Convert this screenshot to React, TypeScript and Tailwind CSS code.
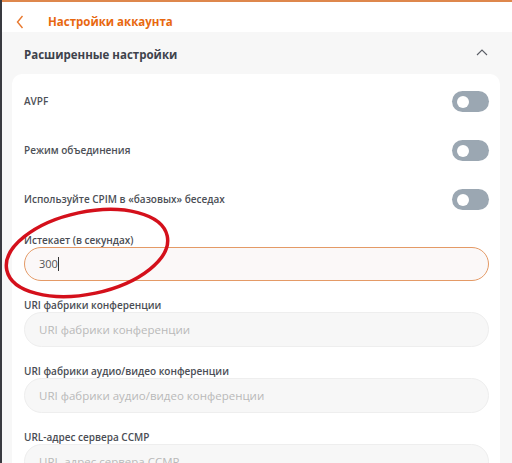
const font = { fontFamily: '"Open Sans", "Liberation Sans", sans-serif' }

function Toggle() {
  return (
    <div className="w-[37px] h-[21px] rounded-full bg-[#9ba7b2] flex items-center pl-[5px]">
      <div className="w-[12px] h-[12px] rounded-full bg-white" />
    </div>
  )
}

function ToggleRow({ label }: { label: string }) {
  return (
    <div className="h-[49px] flex items-center justify-between">
      <span className="text-[10px] font-semibold text-[#4c4f56]">{label}</span>
      <Toggle />
    </div>
  )
}

function Field({ label, placeholder }: { label: string; placeholder: string }) {
  return (
    <div className="mt-[17px]">
      <div className="h-[14px] leading-[14px] text-[10px] font-semibold text-[#4a4d54]">{label}</div>
      <div className="h-[35px] rounded-full bg-[#f7f7f7] border border-[#eeeeee] flex items-center pl-[14px]">
        <span className="text-[11.5px] text-[#b9b9b9]">{placeholder}</span>
      </div>
    </div>
  )
}

export default function App() {
  return (
    <div
      className="w-[512px] h-[463px] overflow-hidden relative flex flex-col border-l-2 border-[#393a40] bg-[#f7f7f7]"
      style={font}
    >
      {/* header */}
      <div className="h-[2px] shrink-0 bg-[#de874c]" />
      <div className="h-[30px] shrink-0 bg-white flex items-center pt-[9px]">
        <svg width="8" height="14" viewBox="0 0 8 14" className="ml-[14px]">
          <path d="M6.5 1 L1.5 7 L6.5 13" fill="none" stroke="#e8782e" strokeWidth="1.4" />
        </svg>
        <span className="ml-[24px] text-[11.5px] font-bold text-[#e8680f]">Настройки аккаунта</span>
      </div>

      {/* section title */}
      <div className="h-[42px] shrink-0 flex items-center justify-between pl-[22px] pr-[24px] pt-[3px]">
        <span className="text-[11.5px] font-bold text-[#3e424b]">Расширенные настройки</span>
        <svg width="12" height="7" viewBox="0 0 12 7" className="-mt-[4px]">
          <path d="M1 6 L6 1 L11 6" fill="none" stroke="#5b5e66" strokeWidth="1.1" />
        </svg>
      </div>

      {/* card */}
      <div className="ml-[10px] mr-[12px] shrink-0 bg-white rounded-t-[10px] pt-[3px] pl-[12px] pr-[11px] pb-[40px]">
        <ToggleRow label="AVPF" />
        <ToggleRow label="Режим объединения" />
        <ToggleRow label="Используйте CPIM в «базовых» беседах" />

        <div className="mt-[9px]">
          <div className="h-[14px] leading-[14px] text-[10px] font-semibold text-[#4a4d54]">Истекает (в секундах)</div>
          <div className="h-[34px] rounded-full bg-[#fbf8f8] border border-[#e49a66] flex items-center pl-[14px]">
            <span className="text-[11px] text-[#555555]">300</span>
            <span className="w-px h-[14px] bg-[#333333]" />
          </div>
        </div>

        <Field label="URI фабрики конференции" placeholder="URI фабрики конференции" />
        <Field label="URI фабрики аудио/видео конференции" placeholder="URI фабрики аудио/видео конференции" />
        <Field label="URL-адрес сервера CCMP" placeholder="URL-адрес сервера CCMP" />
      </div>

      {/* red annotation */}
      <svg className="absolute left-0 top-0 pointer-events-none" width="512" height="463">
        <ellipse
          cx="85"
          cy="253"
          rx="82"
          ry="41"
          fill="none"
          stroke="#d4101b"
          strokeWidth="3.5"
          transform="rotate(-12 85 253)"
        />
      </svg>
    </div>
  )
}
